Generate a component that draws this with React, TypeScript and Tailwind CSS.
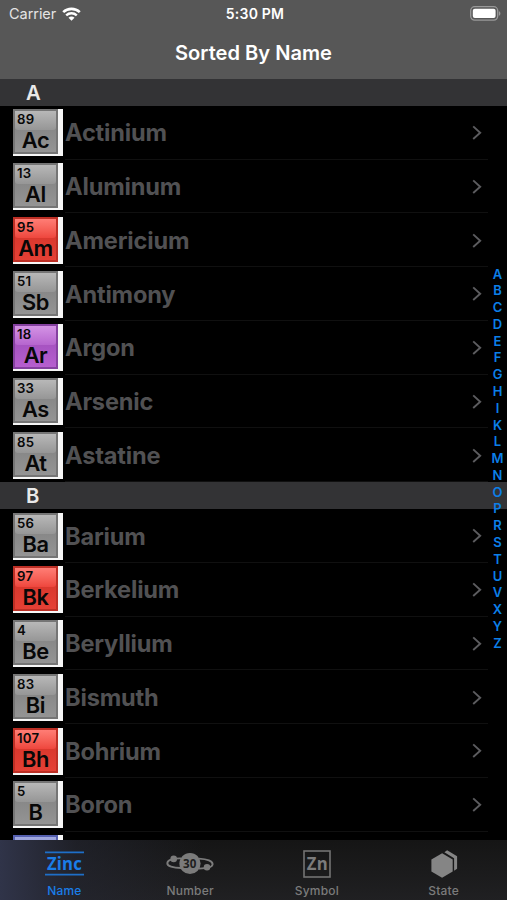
import type { ReactNode } from "react";
import { clsx } from "clsx";

type Tone = "gray" | "red" | "purple" | "blue";

interface ChemicalElement {
    number: number;
    symbol: string;
    name: string;
    tone: Tone;
}

const sections: { letter: string; elements: ChemicalElement[] }[] = [
    {
        letter: "A",
        elements: [
            { number: 89, symbol: "Ac", name: "Actinium", tone: "gray" },
            { number: 13, symbol: "Al", name: "Aluminum", tone: "gray" },
            { number: 95, symbol: "Am", name: "Americium", tone: "red" },
            { number: 51, symbol: "Sb", name: "Antimony", tone: "gray" },
            { number: 18, symbol: "Ar", name: "Argon", tone: "purple" },
            { number: 33, symbol: "As", name: "Arsenic", tone: "gray" },
            { number: 85, symbol: "At", name: "Astatine", tone: "gray" },
        ],
    },
    {
        letter: "B",
        elements: [
            { number: 56, symbol: "Ba", name: "Barium", tone: "gray" },
            { number: 97, symbol: "Bk", name: "Berkelium", tone: "red" },
            { number: 4, symbol: "Be", name: "Beryllium", tone: "gray" },
            { number: 83, symbol: "Bi", name: "Bismuth", tone: "gray" },
            { number: 107, symbol: "Bh", name: "Bohrium", tone: "red" },
            { number: 5, symbol: "B", name: "Boron", tone: "gray" },
        ],
    },
];

const indexLetters = "ABCDEFGHIKLMNOPRSTUVXYZ".split("");

const tileTones: Record<Tone, string> = {
    gray: "border-[#757575] bg-linear-to-b from-[#7e7e7e] to-[#949494]",
    red: "border-[#bd2f25] bg-linear-to-b from-[#d03228] to-[#e54035]",
    purple: "border-[#8541a0] bg-linear-to-b from-[#9949b5] to-[#b65fcf]",
    blue: "border-[#5560b0] bg-linear-to-b from-[#5863b0] to-[#6974c2]",
};

const glossTones: Record<Tone, string> = {
    gray: "from-[#b8b8b8] to-[#969696]",
    red: "from-[#ff7d75] to-[#ee463d]",
    purple: "from-[#d493e5] to-[#b665ce]",
    blue: "from-[#a2a9df] to-[#7680ca]",
};

function StatusBar() {
    return (
        <div className="flex h-[27px] items-center text-white">
            <div className="flex flex-1 items-center gap-[6px] pl-[9px]">
                <span className="text-[14.5px] tracking-[-0.05px] text-[#e4e4e4]">Carrier</span>
                <svg width="19" height="14" viewBox="0 0 19 14" fill="none">
                    <path d="M1.2 5.1C5.8.8 13.2.8 17.8 5.1" stroke="white" strokeWidth="2.6" />
                    <path d="M4.2 8.3c3-2.8 7.6-2.8 10.6 0" stroke="white" strokeWidth="2.4" />
                    <path d="M6.5 10.7c1.7-1.6 4.3-1.6 6 0l-3 3.1z" fill="white" />
                </svg>
            </div>
            <span className="text-[14px] font-semibold tracking-[0.2px]">5:30 PM</span>
            <div className="flex flex-1 justify-end pr-[6px]">
                <svg width="31" height="15" viewBox="0 0 31 15">
                    <rect x=".7" y=".7" width="27" height="13.4" rx="4" fill="none" stroke="#999" strokeWidth="1.3" />
                    <rect x="2.8" y="2.7" width="22.8" height="9.4" rx="2" fill="white" />
                    <path d="M28.9 5.2c2 .7 2 3.8 0 4.5z" fill="#999" />
                </svg>
            </div>
        </div>
    );
}

function TileFrame({ tone, children }: { tone: Tone; children?: ReactNode }) {
    return (
        <div className="h-[47px] w-[50.4px] shrink-0 bg-[#f6f6f6]">
            <div className={clsx("relative h-[45px] w-[45px] border-2 text-[#080808]", tileTones[tone])}>
                <div className={clsx("h-[19px] rounded-b-[3px] bg-linear-to-b", glossTones[tone])} />
                {children}
            </div>
        </div>
    );
}

function ElementRow({ element }: { element: ChemicalElement }) {
    return (
        <li className="flex h-[53.75px] items-start pl-[13px] pt-[3.4px]">
            <TileFrame tone={element.tone}>
                <span className="absolute left-[2px] top-[2px] text-[13.2px] font-semibold leading-[13px] tracking-[0.2px]">
                    {element.number}
                </span>
                <span className="absolute inset-x-0 top-[17px] text-center text-[21.8px] font-semibold leading-[24px] tracking-[-0.4px]">
                    {element.symbol}
                </span>
            </TileFrame>
            <div className="ml-[1.6px] flex h-[50.3px] w-[423px] items-center justify-between border-b border-[#101010] pb-[2px] pr-[6px]">
                <span className="text-[23.6px] font-bold tracking-[-0.18px] text-[#515153]">{element.name}</span>
                <svg width="11" height="16" viewBox="0 0 11 16" fill="none" stroke="#5c5c5f" strokeWidth="1.9">
                    <path d="m2.2 1.4 7 6.3-7 6.3" />
                </svg>
            </div>
        </li>
    );
}

function ZincIcon() {
    return (
        <svg width="40" height="28" viewBox="0 0 40 28">
            <path d="M1 2.3h39M1 24.6h39" stroke="#1e6fc8" strokeWidth="1.7" />
            <text
                x="3"
                y="20.3"
                textLength="35"
                lengthAdjust="spacingAndGlyphs"
                fontFamily="Open Sans"
                fontSize="18.5"
                fontWeight="700"
                fill="#1a7de8"
            >
                Zinc
            </text>
        </svg>
    );
}

function OrbitIcon() {
    return (
        <svg width="48" height="28" viewBox="0 0 48 28">
            <path
                d="M15 18C7 18 1 16 1.3 13 1.7 9.8 8 8.2 15 8.4M33 8.6c8 .4 14 2.6 13.6 6C46.2 17.4 40 18.4 33 18.6"
                fill="none"
                stroke="#7b7b7b"
                strokeWidth="1.9"
            />
            <circle cx="24" cy="13.5" r="10.6" fill="#7b7b7b" />
            <circle cx="7.7" cy="8.9" r="3.3" fill="#7b7b7b" />
            <circle cx="41" cy="17.2" r="3.3" fill="#7b7b7b" />
            <text
                x="17"
                y="18.2"
                textLength="13.6"
                lengthAdjust="spacingAndGlyphs"
                fontFamily="Open Sans"
                fontSize="13"
                fontWeight="700"
                fill="#202020"
            >
                30
            </text>
        </svg>
    );
}

function SymbolIcon() {
    return (
        <svg width="28" height="28" viewBox="0 0 28 28">
            <rect x="1" y="1" width="26" height="26" fill="none" stroke="#737373" strokeWidth="1.6" />
            <text
                x="3.8"
                y="19.8"
                textLength="21"
                lengthAdjust="spacingAndGlyphs"
                fontFamily="Open Sans"
                fontSize="18"
                fontWeight="700"
                fill="#7b7b7b"
            >
                Zn
            </text>
        </svg>
    );
}

function StateIcon() {
    return (
        <svg width="28" height="28" viewBox="0 0 28 28" fill="#858585">
            <path d="m12.1 3.2 10.6 6.3v12l-10.6 6.3-10.7-6.3v-12z" />
            <path d="m14.4 2.2 2.7-2 10 6v12.6l-3 2V8.2z" />
        </svg>
    );
}

const tabs = [
    { label: "Name", icon: <ZincIcon />, active: true },
    { label: "Number", icon: <OrbitIcon />, active: false },
    { label: "Symbol", icon: <SymbolIcon />, active: false },
    { label: "State", icon: <StateIcon />, active: false },
];

export default function App() {
    return (
        <div className="relative flex h-[900px] w-[507px] flex-col overflow-hidden bg-black font-['Inter',sans-serif]">
            <header className="h-[79px] shrink-0 bg-[#575757]">
                <StatusBar />
                <h1 className="pt-[10px] text-center text-[20.1px] font-semibold leading-[32px] text-white">
                    Sorted By Name
                </h1>
            </header>

            <main className="min-h-0 flex-1 overflow-hidden">
                {sections.map((section) => (
                    <section key={section.letter}>
                        <h2 className="flex h-[27px] items-center bg-[#333335] pl-[26px] pt-px text-[20.3px] font-semibold text-[#e9e9e9]">
                            {section.letter}
                        </h2>
                        <ul>
                            {section.elements.map((element) => (
                                <ElementRow key={element.symbol} element={element} />
                            ))}
                        </ul>
                    </section>
                ))}
                {/* next row peeking out above the tab bar */}
                <div className="pl-[13px] pt-[3.4px]">
                    <TileFrame tone="blue" />
                </div>
            </main>

            <nav className="absolute right-0 top-[265.5px] flex w-[19px] flex-col items-center text-[13px] font-semibold leading-[16.78px] text-[#0c7fe8]">
                {indexLetters.map((letter) => (
                    <span key={letter}>{letter}</span>
                ))}
            </nav>

            <footer className="h-[60px] shrink-0 bg-linear-to-b from-[#151515] to-[#202022]">
                <div className="grid h-full grid-cols-4 bg-linear-to-r from-[#303449] via-[#252733]/60 via-15% to-transparent to-40%">
                    {tabs.map((tab) => (
                        <div
                            key={tab.label}
                            className={clsx(
                                "flex flex-col items-center pt-[9.5px] text-[12px] font-medium tracking-[0.2px]",
                                tab.active ? "pl-[2px] text-[#1a7de8]" : "text-[#7b7b7b]",
                            )}
                        >
                            {tab.icon}
                            <span className="mt-[5px] leading-[15px]">{tab.label}</span>
                        </div>
                    ))}
                </div>
            </footer>
        </div>
    );
}
